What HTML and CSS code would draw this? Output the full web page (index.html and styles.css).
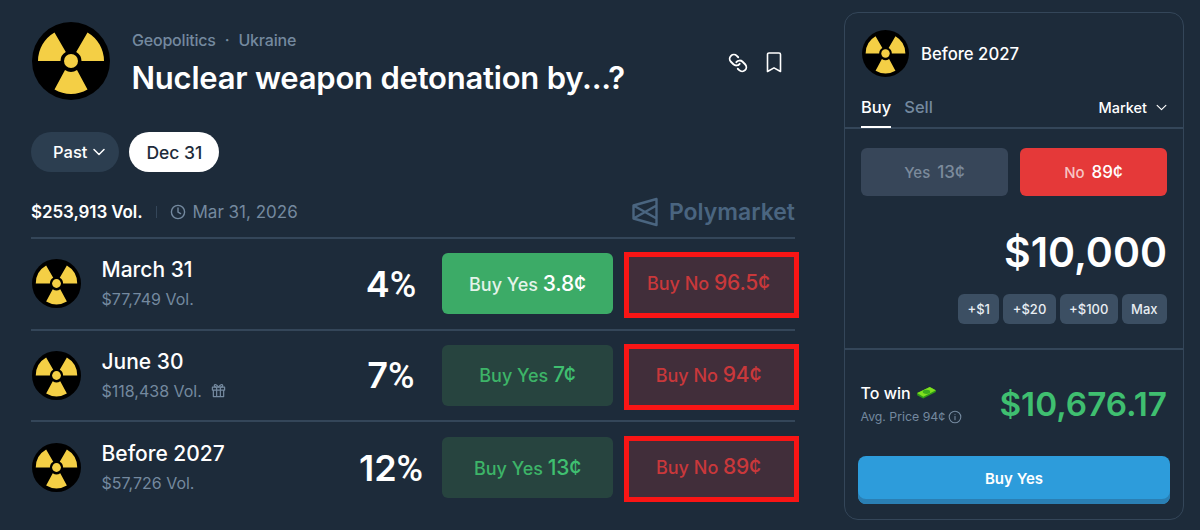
FILE: index.html
```html
<!DOCTYPE html>
<html lang="en">
<head>
  <meta charset="UTF-8" />
  <title>Nuclear weapon detonation by...?</title>
  <link rel="stylesheet" href="styles.css">
</head>
<body>

  <svg class="defs" width="0" height="0">
    <symbol id="nuke" viewBox="0 0 78 78">
      <circle cx="39" cy="39" r="39" fill="#000"/>
      <circle cx="39" cy="39" r="7" fill="#f4cf45"/>
      <path d="M6 39 A33 33 0 0 1 22.500 10.400 L33.800 30 A10.500 10.500 0 0 0 28.500 39 Z" fill="#f4cf45"/>
      <path d="M72 39 A33 33 0 0 0 55.500 10.400 L44.200 30 A10.500 10.500 0 0 1 49.500 39 Z" fill="#f4cf45"/>
      <path d="M22.500 67.600 A33 33 0 0 0 55.500 67.600 L45 48 A10.500 10.500 0 0 1 33 48 Z" fill="#f4cf45"/>
    </symbol>
  </svg>

  <div class="page">
    <main class="market">
      <header class="head">
        <svg class="logo"><use href="#nuke"/></svg>
        <div class="head-text">
          <div class="crumbs"><span>Geopolitics</span><span class="dot">·</span><span>Ukraine</span></div>
          <h1>Nuclear weapon detonation by...?</h1>
        </div>
        <div class="head-icons">
          <svg class="icon-link" viewBox="0 0 24 24" fill="none" stroke="#fff" stroke-width="2.200" stroke-linecap="round" stroke-linejoin="round">
            <g transform="matrix(-1 0 0 1 24 0)">
              <path d="M10 13a5 5 0 0 0 7.500.5l3-3a5 5 0 0 0-7.100-7.100l-1.700 1.700"/>
              <path d="M14 11a5 5 0 0 0-7.500-.5l-3 3a5 5 0 0 0 7.100 7.100l1.700-1.700"/>
            </g>
          </svg>
          <svg class="icon-mark" viewBox="0 0 16 21" fill="none" stroke="#fff" stroke-width="1.600" stroke-linejoin="round">
            <path d="M1.500 2.500a1.500 1.500 0 0 1 1.500-1.500h10a1.500 1.500 0 0 1 1.500 1.500v17l-6.500-3.600-6.500 3.600z"/>
          </svg>
        </div>
      </header>

      <div class="pills">
        <button class="pill">Past
          <svg class="chev" viewBox="0 0 12 8" fill="none" stroke="#fff" stroke-width="1.500" stroke-linecap="round" stroke-linejoin="round"><path d="M1 1.500l5 5 5-5"/></svg>
        </button>
        <button class="pill pill-on">Dec 31</button>
      </div>

      <div class="stats">
        <span class="total">$253,913 Vol.</span>
        <span class="sep"></span>
        <svg class="clock" viewBox="0 0 16 16" fill="none" stroke="#74899f" stroke-width="1.400" stroke-linecap="round"><circle cx="8" cy="8" r="6.600"/><path d="M8 4v4.200l2.600 1.400"/></svg>
        <span class="date">Mar 31, 2026</span>
        <span class="brand">
          <svg class="brand-mark" viewBox="0 0 26 30" fill="none" stroke="#4a6580" stroke-width="2.400" stroke-linejoin="round"><path d="M24.500 2v26L1.500 21.500v-13zM1.500 8.500L24.500 21.500M1.500 21.500L24.500 8.500"/></svg>
          Polymarket
        </span>
      </div>

      <div class="rows">
        <div class="row">
          <svg class="row-logo"><use href="#nuke"/></svg>
          <div class="row-text">
            <div class="row-name">March 31</div>
            <div class="row-vol">$77,749 Vol.</div>
          </div>
          <div class="row-pct">4<span class="pct">%</span></div>
          <button class="buy buy-yes buy-yes-on">Buy Yes <b>3.8¢</b></button>
          <button class="buy buy-no">Buy No <b>96.5¢</b></button>
        </div>
        <div class="row">
          <svg class="row-logo"><use href="#nuke"/></svg>
          <div class="row-text">
            <div class="row-name">June 30</div>
            <div class="row-vol">$118,438 Vol.
              <svg class="gift" viewBox="0 0 16 16" fill="none" stroke="#74899f" stroke-width="1.300" stroke-linejoin="round"><rect x="1.500" y="4.500" width="13" height="3"/><path d="M2.500 7.500v7h11v-7M6 4.500v10M10 4.500v10M8 4.500C6 1 3.500 1 3.500 3c0 1 1 1.500 2.500 1.500M8 4.500C10 1 12.500 1 12.500 3c0 1-1 1.500-2.500 1.500"/></svg>
            </div>
          </div>
          <div class="row-pct">7<span class="pct">%</span></div>
          <button class="buy buy-yes">Buy Yes <b>7¢</b></button>
          <button class="buy buy-no">Buy No <b>94¢</b></button>
        </div>
        <div class="row">
          <svg class="row-logo"><use href="#nuke"/></svg>
          <div class="row-text">
            <div class="row-name">Before 2027</div>
            <div class="row-vol">$57,726 Vol.</div>
          </div>
          <div class="row-pct">12<span class="pct">%</span></div>
          <button class="buy buy-yes">Buy Yes <b>13¢</b></button>
          <button class="buy buy-no">Buy No <b>89¢</b></button>
        </div>
      </div>
    </main>

    <aside class="panel">
      <div class="panel-head">
        <svg class="panel-logo"><use href="#nuke"/></svg>
        <span class="panel-name">Before 2027</span>
      </div>
      <div class="tabs">
        <span class="tab tab-on">Buy</span>
        <span class="tab">Sell</span>
        <span class="order">Market
          <svg class="chev-sm" viewBox="0 0 12 8" fill="none" stroke="#fff" stroke-width="1.300" stroke-linecap="round" stroke-linejoin="round"><path d="M1 1.500l5 5 5-5"/></svg>
        </span>
      </div>
      <div class="panel-body">
        <div class="choice">
          <button class="side side-yes">Yes <b>13¢</b></button>
          <button class="side side-no">No <b>89¢</b></button>
        </div>
        <div class="amount">$10,000</div>
        <div class="quick">
          <button>+$1</button>
          <button>+$20</button>
          <button>+$100</button>
          <button>Max</button>
        </div>
      </div>
      <div class="panel-foot">
        <div class="win">
          <div>
            <div class="win-label">To win
              <svg class="money" viewBox="0 0 22 14"><path d="M1 7.500L14.500 1 21 4.500V6.500L7.500 13.500 1 10z" fill="#2f9a18"/><path d="M1 7.500L14.500 1 21 4.500 7.500 11.500z" fill="#7fe01f"/><ellipse cx="11" cy="6.300" rx="4" ry="2.200" fill="#3cae1c"/></svg>
            </div>
            <div class="win-avg">Avg. Price 94¢
              <svg class="info" viewBox="0 0 14 14" fill="none" stroke="#74899f" stroke-width="1.100" stroke-linecap="round"><circle cx="7" cy="7" r="5.800"/><path d="M7 6.400v3.400M7 4.200v.1"/></svg>
            </div>
          </div>
          <div class="win-value">$10,676.17</div>
        </div>
        <button class="submit">Buy Yes</button>
      </div>
    </aside>
  </div>

</body>
</html>
```

FILE: styles.css
```css
:root {
  --bg: #1d2b3a;
  --line: #344659;
  --muted: #74899f;
  --green: #3db468;
  --green-bright: #3fbf70;
  --red: #c9383b;
}

* {
  box-sizing: border-box;
}

html, body {
  margin: 0;
  height: 100%;
  overflow: hidden;
}

body {
  font-family: Inter, "Liberation Sans", sans-serif;
  background: var(--bg);
  color: #fff;
}

button {
  font-family: inherit;
  border: none;
  cursor: pointer;
}

.defs {
  position: absolute;
}

.page {
  display: flex;
  align-items: flex-start;
  padding: 12px 16px 0 31px;
}

/* left column */
.market {
  width: 764px;
  padding-top: 10px;
}

.head {
  display: flex;
  align-items: flex-start;
}

.logo {
  width: 78px;
  height: 78px;
  margin-left: 1px;
  flex: none;
}

.head-text {
  margin-left: 22px;
  flex: 1;
  padding-top: 9px;
}

.crumbs {
  display: flex;
  gap: 9px;
  font-size: 16px;
  letter-spacing: -0.2px;
  line-height: 18px;
  font-weight: 500;
  color: var(--muted);
}

.head-text h1 {
  margin: 11px 0 0 -0.5px;
  font-size: 31px;
  letter-spacing: -0.22px;
  line-height: 36px;
  font-weight: 600;
}

.head-icons {
  display: flex;
  align-items: center;
  gap: 18px;
  margin: 30px 13px 0 0;
}

.icon-link {
  width: 20px;
  height: 20px;
}

.icon-mark {
  width: 16px;
  height: 21px;
}

.pills {
  display: flex;
  gap: 10px;
  margin-top: 32px;
}

.pill {
  display: flex;
  align-items: center;
  gap: 6px;
  height: 40px;
  padding: 0 14px 0 22px;
  border-radius: 20px;
  background: #2c3e50;
  color: #fff;
  font-size: 16.500px;
  font-weight: 500;
}

.pill-on {
  background: #fff;
  color: #1d2b3a;
  padding: 0 17px;
  font-size: 17.500px;
}

.chev {
  width: 12px;
  height: 8px;
}

.stats {
  display: flex;
  align-items: center;
  height: 32px;
  margin-top: 24px;
  margin-bottom: 9px;
  font-size: 17px;
}

.total {
  font-size: 17px;
  letter-spacing: -0.1px;
  font-weight: 600;
}

.sep {
  width: 1px;
  height: 12px;
  background: var(--line);
  margin: 0 13px;
}

.clock {
  width: 16px;
  height: 16px;
  margin-right: 7px;
}

.date {
  color: var(--muted);
}

.brand {
  display: flex;
  align-items: center;
  gap: 11px;
  margin-left: auto;
  color: #4a6580;
  font-size: 23px;
  font-weight: 600;
}

.brand-mark {
  width: 26px;
  height: 30px;
}

.rows {
  border-top: 2px solid var(--line);
}

.row {
  display: flex;
  align-items: center;
  height: 91.500px;
  border-bottom: 2px solid var(--line);
}

.row:last-child {
  border-bottom: none;
}

.row-logo {
  width: 49px;
  height: 49px;
  margin-left: 1px;
  flex: none;
}

.row-text {
  margin-left: 20.500px;
  width: 244.500px;
}

.row-name {
  font-size: 21px;
  line-height: 24px;
  font-weight: 500;
}

.row-vol {
  display: flex;
  align-items: center;
  gap: 9px;
  margin-top: 7px;
  font-size: 16px;
  line-height: 20px;
  color: var(--muted);
}

.gift {
  width: 15px;
  height: 15px;
}

.row-pct {
  width: 90px;
  margin-right: 6px;
  text-align: center;
  font-size: 36px;
  font-weight: 600;
}

.pct {
  font-family: Roboto, Inter, sans-serif;
  font-weight: 500;
}

.buy {
  width: 171px;
  height: 61px;
  padding-bottom: 2px;
  border-radius: 6px;
  font-size: 18px;
  font-weight: 500;
}

.buy b {
  font-size: 21px;
  letter-spacing: -0.2px;
  font-weight: 500;
}

.buy-yes {
  background: #27443f;
  color: var(--green);
}

.buy-yes b {
  color: var(--green-bright);
}

.buy-yes-on {
  background: #3cab67;
  color: #e4f3ea;
}

.buy-yes-on b {
  color: #fff;
}

.buy-no {
  width: 165px;
  height: 56px;
  margin: 3px 1px 0 16px;
  padding: 0 6px 5px 0;
  border-radius: 0;
  background: #412e3a;
  color: var(--red);
  outline: 5px solid #f91515;
}

/* right panel */
.panel {
  width: 340px;
  height: 508px;
  margin-left: 49px;
  border: 1px solid var(--line);
  border-radius: 14px;
}

.panel-head {
  display: flex;
  align-items: center;
  gap: 12px;
  padding: 17px 0 0 17px;
}

.panel-logo {
  width: 47px;
  height: 47px;
}

.panel-name {
  font-size: 16.700px;
  font-weight: 500;
}

.tabs {
  display: flex;
  align-items: center;
  gap: 13px;
  height: 39px;
  margin-top: 13px;
  padding: 0 16px;
  border-bottom: 2px solid var(--line);
  font-size: 16.500px;
  font-weight: 500;
  color: var(--muted);
}

.tab {
  height: 39px;
  line-height: 36px;
}

.tab-on {
  color: #fff;
  border-bottom: 2px solid #fff;
}

.order {
  display: flex;
  align-items: center;
  gap: 9px;
  margin-left: auto;
  padding-bottom: 2px;
  color: #fff;
  font-size: 14.500px;
}

.chev-sm {
  width: 11px;
  height: 7px;
}

.panel-body {
  padding: 19px 16px 0;
}

.choice {
  display: flex;
  gap: 12px;
}

.side {
  flex: 1;
  height: 48px;
  border-radius: 6px;
  font-size: 15px;
  font-weight: 500;
}

.side b {
  margin-left: 3px;
  font-size: 17px;
  font-weight: 500;
}

.side-yes {
  background: #374659;
  color: #7c8b9c;
}

.side-no {
  background: #e53939;
  color: #f6c4c4;
}

.side-no b {
  color: #fff;
}

.amount {
  margin-top: 31px;
  text-align: right;
  font-size: 41px;
  line-height: 50px;
  font-weight: 600;
}

.quick {
  display: flex;
  justify-content: flex-end;
  gap: 4px;
  margin-top: 17px;
}

.quick button {
  height: 30px;
  padding: 0 9.400px;
  border-radius: 6px;
  background: #3c4f63;
  color: #e8edf2;
  font-size: 13px;
  font-weight: 500;
}

.panel-foot {
  margin-top: 24px;
  padding: 0 13px;
  border-top: 2px solid var(--line);
}

.win {
  display: flex;
  align-items: center;
  justify-content: space-between;
  padding: 33px 3px 0 2.500px;
}

.win-label {
  display: flex;
  align-items: center;
  gap: 5px;
  font-size: 16px;
  line-height: 20px;
  font-weight: 500;
}

.money {
  width: 21px;
  height: 13px;
  margin-top: -2px;
}

.win-avg {
  display: flex;
  align-items: center;
  gap: 3px;
  margin-top: 6px;
  font-size: 12.300px;
  line-height: 16px;
  color: var(--muted);
}

.info {
  width: 14px;
  height: 14px;
}

.win-value {
  font-size: 33.300px;
  font-weight: 600;
  color: var(--green-bright);
}

.submit {
  width: 100%;
  height: 48px;
  margin-top: 31px;
  padding-bottom: 4px;
  border-radius: 8px;
  background: #2d9cdb;
  box-shadow: inset 0 -5px 0 #2a7fb4;
  color: #fff;
  font-size: 15px;
  font-weight: 600;
}
```
